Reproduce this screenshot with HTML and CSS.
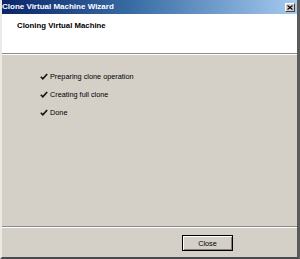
FILE: index.html
```html
<!DOCTYPE html>
<html lang="en">
<head>
    <meta charset="utf-8">
    <title>Clone Virtual Machine Wizard</title>
    <link rel="stylesheet" href="styles.css">
</head>
<body>
    <div id="wizard">
        <div class="titlebar">
            <span class="title">Clone Virtual Machine Wizard</span>
            <span class="closebox">
                <svg width="6" height="5" viewBox="0 0 6 5"><path d="M0.5 0.5 L5.5 4.5 M5.5 0.5 L0.5 4.5" stroke="#000" stroke-width="1.1" fill="none"/></svg>
            </span>
        </div>
        <div class="header">
            <p class="heading">Cloning Virtual Machine</p>
        </div>
        <div class="content">
            <ul class="steps">
                <li><svg class="check" width="8" height="7" viewBox="0 0 8 7"><path d="M0.8 3.8 L2.8 5.8 L7.2 1" stroke="#111" stroke-width="1.6" fill="none"/></svg>Preparing clone operation</li>
                <li><svg class="check" width="8" height="7" viewBox="0 0 8 7"><path d="M0.8 3.8 L2.8 5.8 L7.2 1" stroke="#111" stroke-width="1.6" fill="none"/></svg>Creating full clone</li>
                <li><svg class="check" width="8" height="7" viewBox="0 0 8 7"><path d="M0.8 3.8 L2.8 5.8 L7.2 1" stroke="#111" stroke-width="1.6" fill="none"/></svg>Done</li>
            </ul>
        </div>
        <div class="footer">
            <button class="btn" id="close">Close</button>
        </div>
    </div>
</body>
</html>
```
FILE: styles.css
```css
body{
    margin: 0;
    font-family: "Liberation Sans", Arial, sans-serif;
    background-color: #d4d0c8;
}
#wizard{
    width: 300px;
    height: 259px;
    box-sizing: border-box;
    display: flex;
    flex-direction: column;
    background-color: #d4d0c8;
    border-left: 2px solid #ebe9e3;
    border-right: 3px solid #5a5a5a;
    border-bottom: 2px solid #4a4a4a;
}
.titlebar{
    height: 14px;
    display: flex;
    align-items: center;
    justify-content: space-between;
    padding: 0 2px 0 0;
    background: linear-gradient(to right, #0a246a 0%, #3a6ea5 45%, #a6caf0 100%);
}
.title{
    color: #fff;
    font-weight: bold;
    font-size: 8px;
    line-height: 14px;
}
.closebox{
    width: 10px;
    height: 9px;
    box-sizing: border-box;
    display: flex;
    align-items: center;
    justify-content: center;
    background-color: #d4d0c8;
    border: 1px solid;
    border-color: #fff #404040 #404040 #fff;
}
.header{
    height: 40px;
    box-sizing: border-box;
    background-color: #fff;
    padding: 7px 0 0 15px;
    border-bottom: 1px solid #8a8a8a;
}
.heading{
    margin: 0;
    font-weight: bold;
    font-size: 7.8px;
    line-height: 10px;
    color: #000;
}
.content{
    flex: 1;
    border-top: 1px solid #fff;
    border-bottom: 1px solid #8a8a8a;
}
.steps{
    list-style: none;
    margin: 0;
    padding: 12px 0 0 38px;
}
.steps li{
    height: 18px;
    display: flex;
    align-items: center;
    font-size: 7.3px;
    color: #000;
}
.check{
    margin-right: 2px;
}
.footer{
    height: 30px;
    box-sizing: border-box;
    border-top: 1px solid #fff;
    display: flex;
    justify-content: flex-end;
    align-items: flex-start;
    padding: 7px 64px 0 0;
}
.btn{
    width: 51px;
    height: 16px;
    padding: 0;
    font-family: "Liberation Sans", Arial, sans-serif;
    font-size: 7.3px;
    color: #000;
    background-color: #d4d0c8;
    border: 1px solid #000;
    box-shadow: inset 1px 1px 0 #fff, inset -1px -1px 0 #808080;
}
```
